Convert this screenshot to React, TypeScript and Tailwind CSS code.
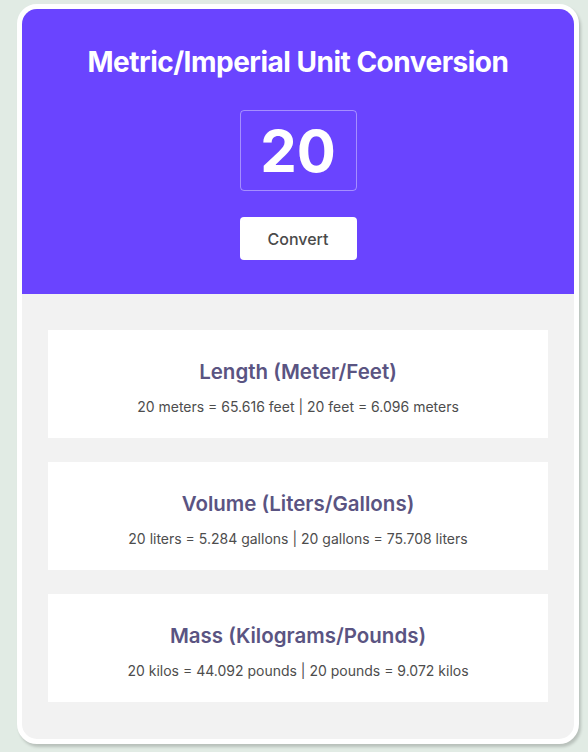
export default function App() {
  const items = [
    { title: "Length (Meter/Feet)", text: "20 meters = 65.616 feet | 20 feet = 6.096 meters" },
    { title: "Volume (Liters/Gallons)", text: "20 liters = 5.284 gallons | 20 gallons = 75.708 liters" },
    { title: "Mass (Kilograms/Pounds)", text: "20 kilos = 44.092 pounds | 20 pounds = 9.072 kilos" },
  ];
  return (
    <div
      className="w-[588px] h-[752px] bg-[#e1ebe4] pt-[4px] pl-[17px] overflow-hidden"
      style={{ fontFamily: "Inter, 'Noto Sans', sans-serif" }}
    >
      <div className="w-[562px] h-[740px] border-[5px] border-white rounded-[20px] overflow-hidden shadow-[2px_3px_3px_rgba(0,0,0,0.18)] flex flex-col bg-[#f2f2f2]">
        <div className="bg-[#6a44ff] flex flex-col items-center pt-[36px] pb-[34px]">
          <h1 className="text-white font-bold text-[28px] leading-[34px] tracking-[-0.5px]">
            Metric/Imperial Unit Conversion
          </h1>
          <div className="mt-[31px] w-[117px] h-[81px] border border-white/40 rounded-[4px] flex items-center justify-center text-white font-bold text-[58px] leading-none">
            20
          </div>
          <button className="mt-[26px] w-[117px] h-[43px] bg-white rounded-[4px] text-[#4a4a4a] text-[16px] font-medium">
            Convert
          </button>
        </div>
        <div className="flex flex-col gap-[24px] px-[26px] pt-[36px]">
          {items.map((it) => (
            <div key={it.title} className="bg-white h-[108px] flex flex-col items-center pt-[29px]">
              <div className="text-[20.5px] leading-[26px] font-semibold text-[#5a5482]">{it.title}</div>
              <div className="mt-[12px] text-[14px] leading-[20px] text-[#4d4d4d]">{it.text}</div>
            </div>
          ))}
        </div>
      </div>
    </div>
  );
}
